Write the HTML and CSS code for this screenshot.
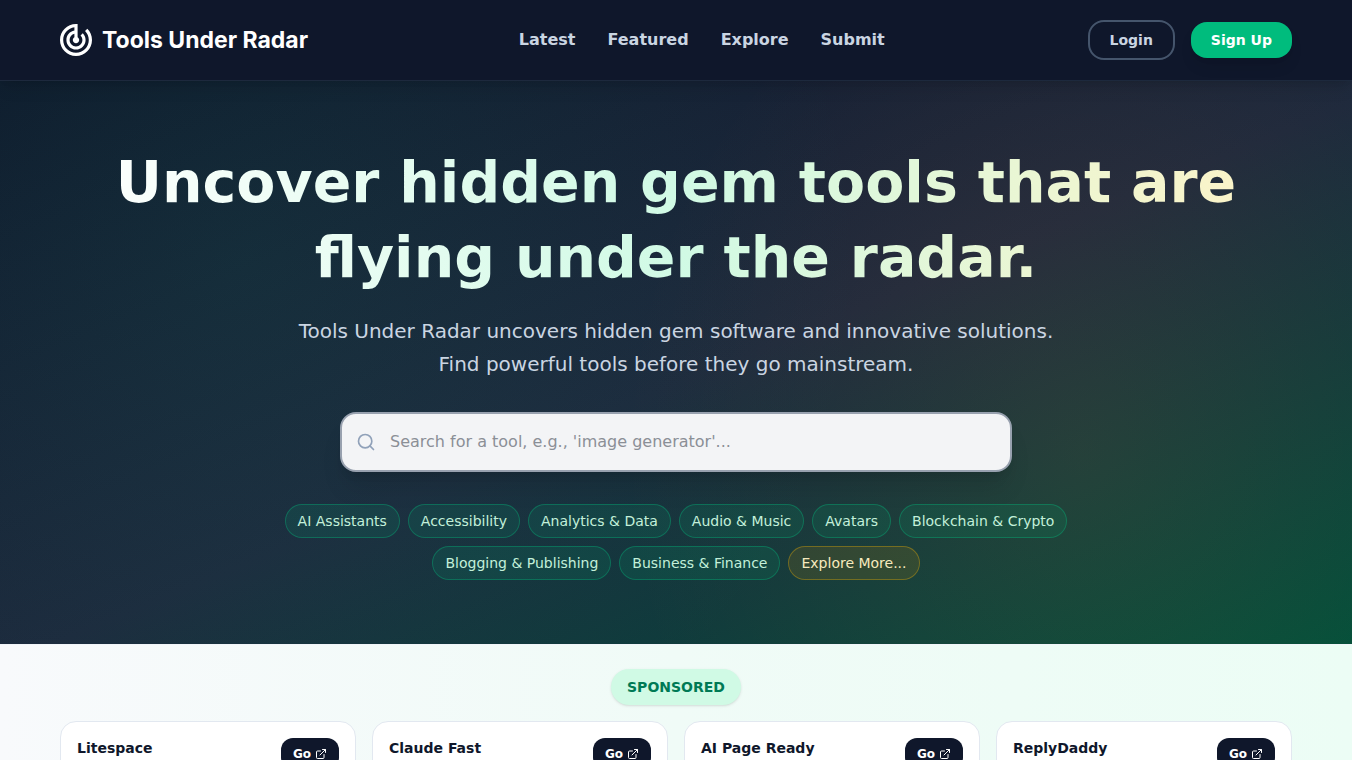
FILE: index.html
```html
<!DOCTYPE html>
<html lang="en">
<head>
<meta charset="utf-8">
<meta name="viewport" content="width=device-width, initial-scale=1">
<title>Tools Under Radar</title>
<link rel="stylesheet" href="styles.css">
</head>
<body>
<svg class="sprite" aria-hidden="true">
  <symbol id="external" viewBox="0 0 24 24" fill="none" stroke="currentColor" stroke-width="2" stroke-linecap="round" stroke-linejoin="round">
    <path d="M15 3h6v6M10 14 21 3M18 13v6a2 2 0 0 1-2 2H5a2 2 0 0 1-2-2V8a2 2 0 0 1 2-2h6"/>
  </symbol>
</svg>
<header class="site-header">
  <div class="container header-row">
    <a class="logo" href="#">
      <svg class="logo-mark" viewBox="2 2 20 20" fill="currentColor" aria-hidden="true"><path d="M19.07 4.93l-1.41 1.41C19.1 7.79 20 9.79 20 12c0 4.42-3.58 8-8 8s-8-3.58-8-8c0-4.08 3.05-7.44 7-7.93v2.02C8.16 6.57 6 9.03 6 12c0 3.31 2.69 6 6 6s6-2.69 6-6c0-1.66-.67-3.16-1.76-4.24l-1.41 1.41C15.55 9.9 16 10.9 16 12c0 2.21-1.79 4-4 4s-4-1.79-4-4c0-1.86 1.28-3.41 3-3.86v2.14c-.6.35-1 .98-1 1.72 0 1.1.9 2 2 2s2-.9 2-2c0-.74-.4-1.38-1-1.72V2h-1C6.48 2 2 6.48 2 12s4.48 10 10 10 10-4.48 10-10c0-2.76-1.12-5.26-2.93-7.07z"/></svg>
      <span>Tools Under Radar</span>
    </a>
    <nav class="main-nav">
      <a href="#">Latest</a>
      <a href="#">Featured</a>
      <a href="#">Explore</a>
      <a href="#">Submit</a>
    </nav>
    <div class="account">
      <button class="btn btn-outline" type="button">Login</button>
      <button class="btn btn-primary" type="button">Sign Up</button>
    </div>
  </div>
</header>
<main>
  <section class="hero">
    <div class="container">
      <h1>Uncover hidden gem tools that are flying under the radar.</h1>
      <p class="lead">Tools Under Radar uncovers hidden gem software and innovative solutions. Find powerful tools before they go mainstream.</p>
      <form class="search" role="search">
        <label for="q" aria-label="Search"><svg class="search-icon" viewBox="0 0 24 24" fill="none" stroke="currentColor" stroke-width="2" stroke-linecap="round" stroke-linejoin="round" aria-hidden="true"><circle cx="11" cy="11" r="8"/><path d="m21 21-4.3-4.3"/></svg></label>
        <input id="q" type="search" placeholder="Search for a tool, e.g., 'image generator'...">
      </form>
      <div class="chips">
        <a class="chip" href="#">AI Assistants</a>
        <a class="chip" href="#">Accessibility</a>
        <a class="chip" href="#">Analytics &amp; Data</a>
        <a class="chip" href="#">Audio &amp; Music</a>
        <a class="chip" href="#">Avatars</a>
        <a class="chip" href="#">Blockchain &amp; Crypto</a>
        <a class="chip" href="#">Blogging &amp; Publishing</a>
        <a class="chip" href="#">Business &amp; Finance</a>
        <a class="chip chip-more" href="#">Explore More...</a>
      </div>
    </div>
  </section>
  <section class="sponsored">
    <div class="container sponsored-inner">
      <h2 class="badge">SPONSORED</h2>
      <div class="cards">
        <article class="card"><h3>Litespace</h3><a class="go" href="#">Go <svg class="go-icon" aria-hidden="true"><use href="#external"/></svg></a></article>
        <article class="card"><h3>Claude Fast</h3><a class="go" href="#">Go <svg class="go-icon" aria-hidden="true"><use href="#external"/></svg></a></article>
        <article class="card"><h3>AI Page Ready</h3><a class="go" href="#">Go <svg class="go-icon" aria-hidden="true"><use href="#external"/></svg></a></article>
        <article class="card"><h3>ReplyDaddy</h3><a class="go" href="#">Go <svg class="go-icon" aria-hidden="true"><use href="#external"/></svg></a></article>
      </div>
    </div>
  </section>
</main>
</body>
</html>
```
FILE: styles.css
```css
*, *::before, *::after { box-sizing: border-box; }
body {
  margin: 0;
  font-family: "DejaVu Sans", sans-serif;
  font-size: 16px;
  line-height: 24px;
  color: #0f172b;
  background: #f8fafc;
}
h1, h2, h3, p { margin: 0; }
a { color: inherit; text-decoration: none; }
.sprite { display: none; }
.container { max-width: 1280px; margin: 0 auto; padding: 0 24px; }

.site-header {
  position: relative;
  z-index: 1;
  background: #0f172b;
  border-bottom: 1px solid #1d293d;
  box-shadow: 0 10px 15px -3px rgba(0, 0, 0, .1), 0 4px 6px -4px rgba(0, 0, 0, .1);
}
.header-row { display: flex; align-items: center; justify-content: space-between; min-height: 80px; }
.logo {
  display: flex;
  align-items: center;
  gap: 10px;
  min-width: 256px;
  color: #fff;
  font: 700 23px/32px Inter, sans-serif;
}
.logo-mark { width: 32px; height: 32px; }
.main-nav { display: flex; gap: 32px; font-weight: 700; color: #cad5e2; }
.account { display: flex; align-items: center; gap: 16px; }
.btn {
  border: 0;
  border-radius: 16px;
  padding: 8px 20px;
  font: 700 14px/20px "DejaVu Sans", sans-serif;
}
.btn-outline { border: 2px solid #45556c; color: #cad5e2; background: transparent; }
.btn-primary {
  color: #fff;
  background: #00bc7d;
  box-shadow: 0 10px 15px -3px rgba(0, 0, 0, .1), 0 4px 6px -4px rgba(0, 0, 0, .1);
}

.hero {
  padding: 64px 0;
  text-align: center;
  background:
    radial-gradient(ellipse 46% 105% at 18% 32%, rgba(16, 185, 129, .09), transparent),
    radial-gradient(ellipse 34% 95% at 80% 66%, rgba(251, 130, 36, .09), transparent),
    linear-gradient(to bottom right, #0f172b, #1d293d 52%, #004f3b);
}
.hero h1 {
  margin-bottom: 20px;
  font-size: 57px;
  line-height: 75px;
  font-weight: 700;
  color: transparent;
  background: linear-gradient(to right, #fff, #d0fae5, #fef3c6);
  background-clip: text;
  -webkit-background-clip: text;
}
.lead { max-width: 768px; margin: 0 auto 31px; font-size: 20px; line-height: 33px; color: #cad5e2; }
.search {
  display: flex;
  align-items: center;
  gap: 14px;
  max-width: 672px;
  margin: 0 auto 32px;
  padding: 0 14px;
  color: #90a1b9;
  background: #f3f4f6;
  border: 2px solid #98a1af;
  border-radius: 16px;
  box-shadow: 0 20px 25px -5px rgba(0, 0, 0, .1), 0 8px 10px -6px rgba(0, 0, 0, .1);
}
.search label { display: flex; }
.search-icon { width: 20px; height: 20px; }
.search input {
  flex: 1;
  min-width: 0;
  padding: 16px 0;
  border: 0;
  outline: 0;
  background: transparent;
  color: #0f172b;
  font: 400 16px/24px "DejaVu Sans", sans-serif;
}
.search input::placeholder { color: #8b8f96; }
.chips { display: flex; flex-wrap: wrap; justify-content: center; gap: 8px; max-width: 896px; margin: 0 auto; }
.chip {
  padding: 6px 12px;
  font-size: 14px;
  line-height: 20px;
  color: #c3f0da;
  background: rgba(0, 188, 125, .12);
  border: 1px solid rgba(0, 188, 125, .35);
  border-radius: 17px;
}
.chip-more { color: #f6eabe; background: rgba(240, 160, 0, .12); border-color: rgba(240, 177, 0, .35); }

.sponsored {
  padding: 24px 0;
  border-top: 1px solid #f1f5f9;
  background: linear-gradient(to right, #f8fafc, #f0fbf7 50%, #ecfdf5);
}
.sponsored-inner { display: flex; flex-direction: column; align-items: center; gap: 16px; }
.badge {
  padding: 8px 16px;
  font-size: 14px;
  line-height: 20px;
  color: #007a55;
  background: #d0fae5;
  border-radius: 18px;
  box-shadow: 0 1px 3px rgba(0, 0, 0, .1), 0 1px 2px -1px rgba(0, 0, 0, .1);
}
.cards { align-self: stretch; display: grid; grid-template-columns: repeat(4, 1fr); gap: 16px; }
.card {
  display: flex;
  align-items: flex-start;
  justify-content: space-between;
  min-height: 128px;
  padding: 16px;
  background: #fff;
  border: 1px solid #e2e8f0;
  border-radius: 16px;
}
.card h3 { font-size: 14px; line-height: 20px; }
.go {
  display: flex;
  align-items: center;
  gap: 4px;
  padding: 8px 12px;
  font-size: 12px;
  line-height: 16px;
  font-weight: 700;
  color: #fff;
  background: #0f172b;
  border-radius: 12px;
}
.go-icon { width: 12px; height: 12px; }
```
